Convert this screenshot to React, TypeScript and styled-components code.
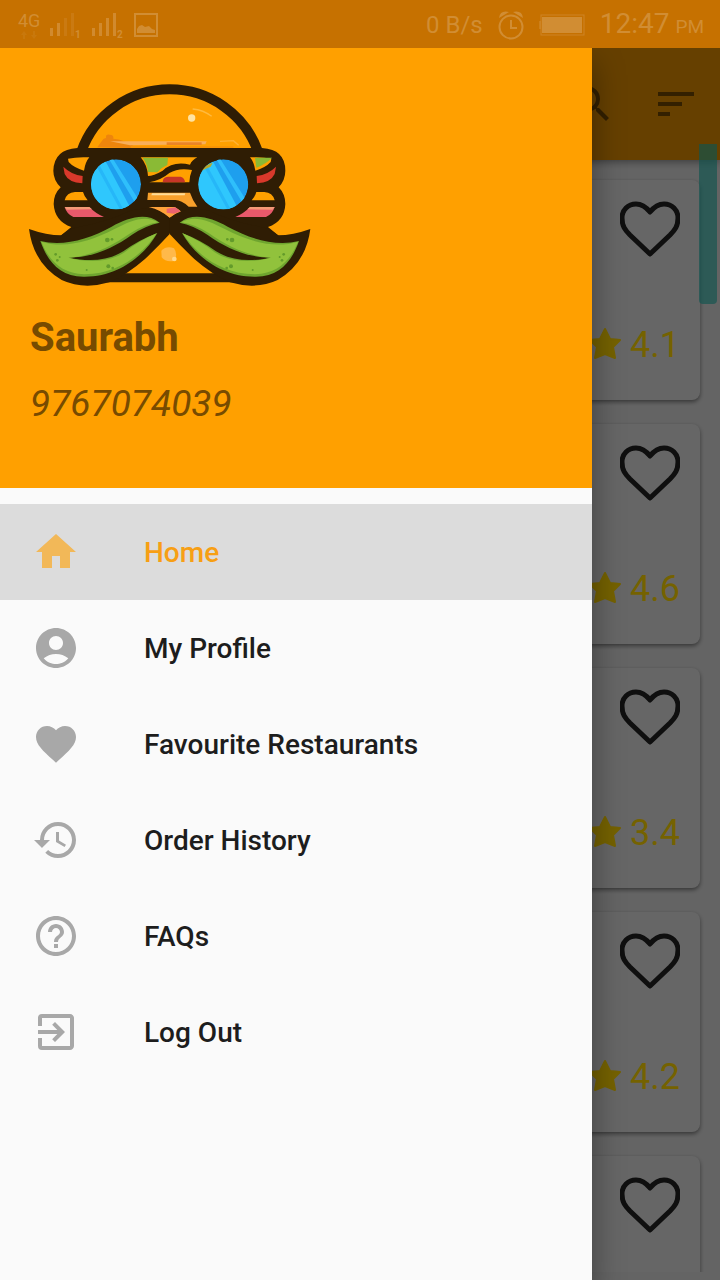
import React from "react";
import styled, { createGlobalStyle } from "styled-components";
import {
  MdAccountCircle,
  MdExitToApp,
  MdFavorite,
  MdHelpOutline,
  MdHistory,
  MdHome,
  MdSearch,
  MdSort,
} from "react-icons/md";
import type { IconType } from "react-icons";

const GlobalStyle = createGlobalStyle`
  * { box-sizing: border-box; }
  body {
    margin: 0;
    background: #fafafa;
    font-family: Roboto, "Liberation Sans", sans-serif;
  }
  button { border: 0; padding: 0; background: none; font: inherit; color: inherit; cursor: pointer; }
`;

const Screen = styled.div`
  position: relative;
  height: 100vh;
  overflow: hidden;
  display: flex;
  flex-direction: column;
  padding-bottom: 8px;
`;

const StatusBar = styled.header`
  position: relative;
  z-index: 4;
  flex: none;
  display: flex;
  align-items: center;
  justify-content: space-between;
  height: 48px;
  padding: 2px 16px 0 18px;
  background: #c67100;
  color: #d18d33;
`;

const StatusGroup = styled.div<{ $gap: number }>`
  display: flex;
  align-items: center;
  gap: ${(p) => p.$gap}px;
`;

const StatusText = styled.span<{ $size: number }>`
  font-size: ${(p) => p.$size}px;
  line-height: 32px;
`;

const Clock = styled.time`
  display: flex;
  align-items: baseline;
  gap: 6px;
`;

const AppBar = styled.div`
  flex: none;
  display: flex;
  align-items: center;
  justify-content: flex-end;
  gap: 36px;
  height: 112px;
  padding: 0 20px;
  background: #ffa000;
  box-shadow: 0 2px 8px rgba(0, 0, 0, 0.4);
  z-index: 1;
`;

const BarButton = styled.button`
  display: flex;
  color: rgba(0, 0, 0, 0.5);
`;

const CardList = styled.main`
  flex: 1;
  min-height: 0;
  display: flex;
  flex-direction: column;
  gap: 24px;
  padding: 20px;
  overflow: hidden;
`;

const Card = styled.article`
  flex: none;
  display: flex;
  flex-direction: column;
  justify-content: space-between;
  align-items: flex-end;
  height: 220px;
  padding: 20px 20px 34px;
  border-radius: 8px;
  background: #ffffff;
  box-shadow: 0 2px 4px rgba(0, 0, 0, 0.45);
`;

const HeartButton = styled.button`
  display: flex;
  color: #262626;
`;

const Rating = styled.div`
  position: relative;
  z-index: 3;
  display: flex;
  align-items: center;
  gap: 8px;
  color: #756200;
  font-size: 36px;
  line-height: 42px;
`;

const ScrollThumb = styled.div`
  position: absolute;
  z-index: 1;
  top: 144px;
  right: 3px;
  width: 18px;
  height: 160px;
  border-radius: 0 0 4px 4px;
  background: rgba(38, 211, 196, 0.65);
`;

const Scrim = styled.div`
  position: absolute;
  z-index: 2;
  inset: 0;
  background: rgba(0, 0, 0, 0.6);
`;

const Drawer = styled.aside`
  position: absolute;
  z-index: 3;
  top: 48px;
  bottom: 0;
  left: 0;
  width: calc(100% - 128px);
  background: #fafafa;
  box-shadow: 0 16px 30px rgba(0, 0, 0, 0.4);
`;

const DrawerHeader = styled.div`
  height: 440px;
  padding: 32px 30px;
  background: #ffa000;
  color: #774b00;
`;

const UserName = styled.h1`
  margin: 22px 0 0;
  font-size: 40px;
  font-weight: 700;
  line-height: 48px;
`;

const Phone = styled.p`
  margin: 20px 0 0;
  font-size: 37px;
  font-style: italic;
  line-height: 44px;
`;

const Menu = styled.nav`
  display: flex;
  flex-direction: column;
  padding-top: 16px;
`;

const MenuLink = styled.a<{ $active: boolean }>`
  display: flex;
  align-items: center;
  gap: 64px;
  height: 96px;
  padding: 0 32px;
  font-size: 28px;
  font-weight: 500;
  line-height: 32px;
  text-decoration: none;
  color: ${(p) => (p.$active ? "#f79f14" : "#1d1d1d")};
  background: ${(p) => (p.$active ? "#dcdcdc" : "transparent")};

  svg {
    flex: none;
    color: ${(p) => (p.$active ? "#f2b858" : "#a8a8a8")};
  }
`;

const MenuLabel = styled.span`
  padding-top: 2px;
`;

const LogoArt = styled.svg`
  display: block;
  overflow: visible;
`;

/* Left half of the burger's layers and moustache; drawn twice, once mirrored. */
function BurgerHalf() {
  return (
    <>
      <path d="M144 266 Q170 260 208 262 Q196 276 192 302 Q160 292 146 276 Z" fill="#ffa000" />
      <path d="M130 290 Q154 314 188 318 L187 340 Q146 338 134 312 Z" fill="#d8392b" />
      <path d="M134 391 Q140 367 165 366 L189 366 Q193 380 203 391 Z" fill="#ffa000" />
      <path d="M134 411 L208 411 Q226 430 252 441 L160 441 Q140 432 134 411 Z" fill="#e8596a" />
      <path d="M134 411 L208 411 L216 418 L140 419 Z" fill="#f39a76" />
      <path
        d="M27 477 Q80 496 124 496 Q150 474 180 470 Q270 452 330 422 Q400 404 449 444 L449 492 Q412 532 375 567 Q320 615 268 637 Q190 660 125 630 Q40 580 27 477 Z"
        fill="#2f1d04"
      />
      <path
        d="M61 513 C130 530 205 508 275 470 C325 443 378 426 419 458 Q378 466 336 494 C280 534 220 562 145 563 C210 576 265 572 310 544 Q356 510 412 489 C378 550 300 622 190 620 C118 619 82 573 61 513 Z"
        fill="#6fa52f"
      />
      <path
        d="M64 515 C135 537 212 514 282 478 C333 450 378 434 414 457 Q370 464 331 490 C275 529 215 559 145 563 C210 580 270 575 314 547 Q358 512 410 490 C374 546 300 612 193 613 C124 611 86 570 64 515 Z"
        fill="#91c23c"
      />
      <g fill="#639b2b">
        <circle cx="262" cy="510" r="7" />
        <circle cx="276" cy="508" r="4" />
        <circle cx="265" cy="589" r="6" />
        <circle cx="278" cy="594" r="4" />
        <circle cx="107" cy="553" r="4" />
        <circle cx="119" cy="561" r="3" />
        <circle cx="112" cy="571" r="4" />
        <circle cx="200" cy="600" r="3" />
      </g>
    </>
  );
}

function Lens() {
  return (
    <g clipPath="url(#lens)">
      <circle cx="288" cy="343" r="75" fill="#1e9fee" />
      <path d="M200 250 H244 L340 430 H200 Z" fill="#2fc7fd" />
      <path d="M226 262 L322 440 L314 444 L216 264 Z" fill="#26b7f8" />
      <path d="M276 262 L370 412 L358 420 L264 262 Z" fill="#2fbffb" />
    </g>
  );
}

function BurgerLogo() {
  return (
    <LogoArt width="282" height="212" viewBox="30 30 846 636" role="img" aria-label="Burger logo">
      <clipPath id="lens">
        <circle cx="288" cy="343" r="75" />
      </clipPath>
      {/* top bun */}
      <path d="M184 245 A280 276 0 0 1 714 245" fill="none" stroke="#2f1d04" strokeWidth="30" />
      <path d="M232 232 L246 212 Q250 204 258 204 Q256 192 269 194 Q282 194 280 206 Q296 206 312 214 L340 222 L334 234 Z" fill="#ee850c" />
      <path d="M270 214 L560 214 L556 223 L330 226 Z" fill="#f8af5b" />
      <path d="M440 217 L545 217 L545 225 L440 225 Z" fill="#ea8426" />
      <path d="M332 227 L640 229 L640 235 L332 235 Z" fill="#f79305" />
      <path d="M600 214 L640 212 L656 226" fill="none" stroke="#ffb236" strokeWidth="4" />
      <circle cx="515" cy="144" r="11" fill="#ffe3a2" />
      <path d="M518 117 Q550 120 575 139" fill="none" stroke="#ffba3e" strokeWidth="4" />
      {/* fillings */}
      <path
        d="M172 234 L726 234 Q796 238 796 302 Q796 330 776 352 Q796 372 796 402 Q794 454 744 471 L780 500 L118 500 L154 471 Q104 454 101 402 Q101 372 122 352 Q100 330 100 302 Q102 238 172 234 Z"
        fill="#2f1d04"
      />
      <path d="M362 262 L532 262 Q516 270 510 284 Q460 272 428 302 Q400 318 384 318 Q382 285 362 262 Z" fill="#ffa000" />
      <path d="M368 263 L444 263 L442 285 Q424 292 412 307 L384 306 Q382 282 368 263 Z" fill="#8aba35" />
      <path d="M388 337 Q424 330 448 309 Q476 292 516 300 Q508 320 508 337 Z" fill="#ffa000" />
      <path d="M428 337 Q428 321 444 320 L482 320 Q494 323 495 337 Z" fill="#c73627" />
      <path d="M384 368 L510 368 Q518 392 532 410 L506 410 Q484 390 466 390 L382 390 Z" fill="#f8a02b" />
      <path d="M396 370 L496 370 L494 376 L394 376 Z" fill="#ffdc98" />
      <path d="M386 411 L464 411 Q480 420 484 426 Q466 430 449 444 Q424 420 386 411 Z" fill="#ffa33a" />
      <path d="M440 416 L466 412 L482 424 L462 431 L440 428 Z" fill="#ec6370" />
      {/* bottom bun */}
      <path d="M449 488 L590 618 L310 618 Z" fill="#ffa000" />
      <path d="M260 610 H640 V637 H260 Z" fill="#2f1d04" />
      <path d="M424 542 Q440 526 462 535 Q474 552 464 572 Q438 578 425 562 Z" fill="#ffb94a" />
      <circle cx="463" cy="567" r="7" fill="#ffd88c" />
      <BurgerHalf />
      <g transform="translate(898 0) scale(-1 1)">
        <BurgerHalf />
      </g>
      <path d="M705 263 L756 263 Q738 282 709 293 Z" fill="#8aba35" />
      {/* sunglasses */}
      <Lens />
      <g transform="translate(322 0)">
        <Lens />
      </g>
      <path d="M546 302 Q558 283 578 278 L572 290 L554 298 Z" fill="#b8a72c" />
    </LogoArt>
  );
}

function SignalIcon({ levels, label }: { levels: number; label: string }) {
  return (
    <svg width="32" height="30" viewBox="0 0 32 30" fill="currentColor" aria-hidden="true">
      {[0, 1, 2, 3].map((i) => (
        <rect key={i} x={i * 7} y={18 - i * 5} width="3" height={8 + i * 5} opacity={i < levels ? 0.9 : 0.35} />
      ))}
      <text x="25" y="28" fontSize="10" fontWeight="700">
        {label}
      </text>
    </svg>
  );
}

function PictureIcon() {
  return (
    <svg width="24" height="24" viewBox="0 0 24 24" aria-hidden="true">
      <rect x="1" y="1" width="22" height="22" fill="none" stroke="currentColor" strokeWidth="2" />
      <path d="M3 20 V16 L5 13 L8 12 L11 14 L15 13 L18 16 L21 17 V20 Z" fill="currentColor" />
    </svg>
  );
}

function AlarmIcon() {
  return (
    <svg width="26" height="30" viewBox="0 0 26 30" fill="none" stroke="currentColor" strokeWidth="2" aria-hidden="true">
      <circle cx="13" cy="17" r="11.5" />
      <path d="M13 10 V18 H19" />
      <path d="M1 8 Q2 0 11 2 Z M25 8 Q24 0 15 2 Z" fill="currentColor" stroke="none" />
    </svg>
  );
}

function BatteryIcon() {
  return (
    <svg width="46" height="22" viewBox="0 0 46 22" aria-hidden="true">
      <rect x="2" y="1" width="43" height="20" fill="none" stroke="currentColor" strokeWidth="1" opacity="0.7" />
      <rect x="3" y="3" width="40" height="16" fill="currentColor" />
      <rect x="0" y="7" width="2" height="8" fill="currentColor" opacity="0.5" />
    </svg>
  );
}

function HeartOutline() {
  return (
    <svg width="60" height="58" viewBox="0 0 60 58" fill="none" stroke="currentColor" strokeWidth="5" strokeLinejoin="round" aria-hidden="true">
      <path d="M30 12 C26 7 21 4 16 4 C8 4 2 10 2 18 C2 26 5 30 10 35 L30 54 L50 35 C55 30 58 26 58 18 C58 10 52 4 44 4 C39 4 34 7 30 12 Z" />
    </svg>
  );
}

function Star() {
  return (
    <svg width="34" height="36" viewBox="0 0 34 36" fill="currentColor" stroke="currentColor" strokeWidth="2" strokeLinejoin="round" aria-hidden="true">
      <path d="M17 2 L22 12 L32 13 L25 20 L27 31 L17 27 L7 31 L9 20 L2 13 L12 12 Z" />
    </svg>
  );
}

/* The last restaurant has no rating yet. */
const restaurants: { id: number; rating?: string }[] = [
  { id: 1, rating: "4.1" },
  { id: 2, rating: "4.6" },
  { id: 3, rating: "3.4" },
  { id: 4, rating: "4.2" },
  { id: 5 },
];

const menu: { label: string; icon: IconType }[] = [
  { label: "Home", icon: MdHome },
  { label: "My Profile", icon: MdAccountCircle },
  { label: "Favourite Restaurants", icon: MdFavorite },
  { label: "Order History", icon: MdHistory },
  { label: "FAQs", icon: MdHelpOutline },
  { label: "Log Out", icon: MdExitToApp },
];

const Network = styled.div`
  display: flex;
  flex-direction: column;
  align-items: center;
  font-size: 18px;
  line-height: 20px;
`;

function NetworkArrows() {
  return (
    <svg width="16" height="8" viewBox="0 0 16 8" fill="currentColor" opacity="0.25" aria-hidden="true">
      <path d="M3 0 L6 4 H4 V8 H2 V4 H0 Z M13 8 L10 4 H12 V0 H14 V4 H16 Z" />
    </svg>
  );
}

export default function App() {
  return (
    <Screen>
      <GlobalStyle />
      <StatusBar>
        <StatusGroup $gap={10}>
          <Network>
            4G
            <NetworkArrows />
          </Network>
          <SignalIcon levels={2} label="1" />
          <SignalIcon levels={4} label="2" />
          <PictureIcon />
        </StatusGroup>
        <StatusGroup $gap={15}>
          <StatusText $size={24}>0 B/s</StatusText>
          <AlarmIcon />
          <BatteryIcon />
          <Clock>
            <StatusText $size={28}>12:47</StatusText>
            <StatusText $size={19}>PM</StatusText>
          </Clock>
        </StatusGroup>
      </StatusBar>

      <AppBar>
        <BarButton aria-label="Search">
          <MdSearch size={48} />
        </BarButton>
        <BarButton aria-label="Sort">
          <MdSort size={48} />
        </BarButton>
      </AppBar>
      <CardList>
        {restaurants.map(({ id, rating }) => (
          <Card key={id}>
            <HeartButton aria-label="Add to favourites">
              <HeartOutline />
            </HeartButton>
            {rating && (
              <Rating>
                <Star />
                {rating}
              </Rating>
            )}
          </Card>
        ))}
      </CardList>
      <ScrollThumb />

      <Scrim />
      <Drawer>
        <DrawerHeader>
          <BurgerLogo />
          <UserName>Saurabh</UserName>
          <Phone>9767074039</Phone>
        </DrawerHeader>
        <Menu>
          {menu.map(({ label, icon: Icon }, i) => (
            <MenuLink key={label} href="#" $active={i === 0}>
              <Icon size={48} />
              <MenuLabel>{label}</MenuLabel>
            </MenuLink>
          ))}
        </Menu>
      </Drawer>
    </Screen>
  );
}
